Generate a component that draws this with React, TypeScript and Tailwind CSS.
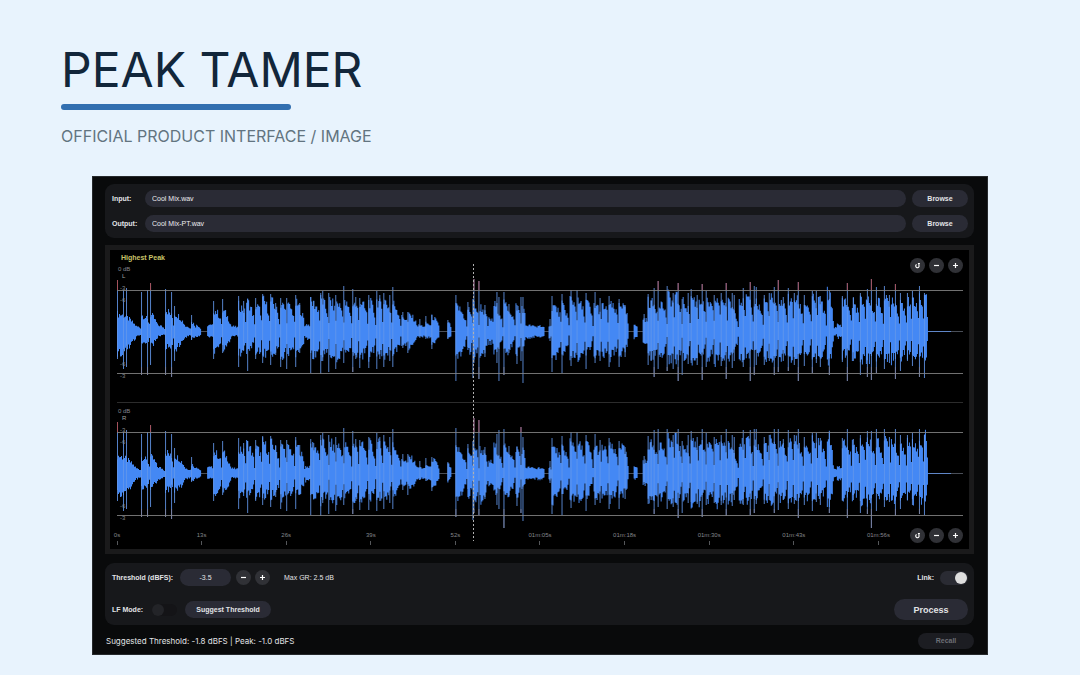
import { useState } from 'react';
import type { ReactNode } from 'react';

// [x, level above centre, level below centre, level left when the next hit lands]
type Hit = [number, number, number, number];
// [x, height above centre, depth below centre]
type Peak = [number, number, number];

const WIDTH = 845;
const CENTER = 70;
const THRESHOLD = 41;

const HITS: Hit[] = [
  [0, 17, 20, 5], [19, 5, 5, 3], [24, 16, 14, 6], [33, 16, 13, 4], [41, 6, 5, 2], [48, 21, 16, 9],
  [57, 17, 16, 5], [68, 5, 5, 3], [74, 9, 7, 3], [79, 6, 5, 2], [84, 0, 0, 0], [90, 6, 5, 6], [96, 21, 18, 8],
  [105, 20, 16, 4], [114, 5, 4, 4], [121, 25, 20, 15], [129, 29, 20, 6], [138, 25, 21, 14], [145, 30, 22, 12],
  [153, 29, 21, 8], [163, 27, 23, 14], [170, 25, 20, 10], [178, 27, 20, 5], [188, 7, 7, 6], [193, 28, 22, 17],
  [203, 31, 26, 8], [212, 30, 28, 15], [219, 28, 25, 11], [227, 27, 20, 9], [235, 28, 24, 16], [242, 29, 24, 10],
  [251, 29, 24, 7], [259, 30, 24, 16], [266, 30, 22, 11], [275, 27, 20, 6], [284, 14, 13, 8], [291, 16, 15, 3],
  [301, 6, 5, 4], [308, 8, 6, 5], [314, 14, 12, 3], [322, 0, 0, 0], [330, 9, 7, 2], [334, 0, 0, 0],
  [338, 24, 24, 5], [350, 22, 20, 8], [356, 27, 25, 4], [362, 24, 25, 6], [371, 12, 11, 9], [376, 26, 19, 4],
  [386, 26, 21, 6], [398, 25, 20, 9], [404, 24, 16, 3], [409, 6, 6, 4], [420, 6, 6, 3], [427, 0, 0, 0],
  [431, 6, 6, 4], [434, 25, 26, 12], [444, 25, 19, 5], [452, 32, 25, 17], [460, 28, 24, 12], [468, 29, 20, 3],
  [476, 26, 22, 15], [484, 25, 22, 14], [491, 26, 24, 11], [501, 28, 22, 9], [511, 0, 0, 0], [516, 8, 6, 3],
  [520, 0, 0, 0], [525, 12, 10, 10], [530, 29, 24, 17], [541, 29, 25, 8], [550, 34, 29, 21], [557, 34, 27, 9],
  [565, 28, 23, 12], [573, 33, 28, 19], [581, 32, 26, 8], [589, 29, 25, 11], [597, 32, 29, 20], [603, 32, 27, 17],
  [610, 28, 25, 6], [621, 32, 27, 19], [628, 32, 27, 10], [636, 30, 23, 8], [646, 29, 25, 20], [652, 32, 27, 10],
  [661, 30, 25, 13], [670, 31, 27, 20], [676, 32, 26, 10], [686, 28, 24, 11], [694, 31, 26, 20], [700, 31, 25, 5],
  [709, 38, 30, 10], [716, 4, 4, 3], [719, 7, 6, 4], [724, 31, 22, 12], [734, 28, 23, 11], [742, 30, 27, 20],
  [748, 32, 27, 12], [758, 30, 24, 12], [766, 31, 25, 20], [773, 33, 27, 9], [782, 30, 24, 11], [789, 29, 22, 12],
  [794, 31, 25, 20], [801, 31, 26, 16], [806, 38, 27, 12], [810, 0, 0, 0],
];

const PEAKS: Peak[] = [
  [0, 51, 28], [6, 41, 38], [9, 43, 36], [24, 39, 44], [30, 41, 44], [33, 48, 34], [48, 42, 44], [54, 39, 46],
  [57, 25, 30], [74, 16, 9], [96, 30, 28], [105, 32, 22], [121, 35, 36], [126, 30, 20], [130, 32, 40],
  [138, 33, 28], [145, 37, 32], [153, 37, 34], [158, 28, 24], [163, 33, 36], [169, 33, 38], [178, 36, 36],
  [182, 28, 22], [193, 34, 42], [196, 30, 26], [203, 38, 43], [205, 40, 30], [211, 38, 41], [218, 36, 38],
  [226, 45, 32], [235, 42, 41], [238, 34, 28], [242, 33, 37], [251, 36, 37], [259, 40, 38], [262, 36, 28],
  [266, 38, 36], [272, 36, 30], [275, 44, 36], [285, 19, 17], [290, 19, 22], [302, 12, 7], [308, 15, 8],
  [314, 16, 18], [330, 11, 8], [338, 36, 50], [350, 29, 16], [355, 32, 47], [356, 52, 32], [361, 50, 48],
  [367, 26, 26], [379, 39, 32], [381, 34, 50], [386, 39, 44], [391, 27, 22], [399, 26, 33], [403, 34, 30],
  [405, 34, 52], [432, 12, 10], [434, 35, 41], [444, 37, 42], [453, 41, 35], [459, 41, 24], [468, 38, 38],
  [477, 39, 32], [482, 33, 30], [491, 35, 36], [501, 32, 36], [507, 26, 26], [526, 17, 12], [530, 37, 34],
  [533, 31, 30], [536, 43, 46], [540, 50, 38], [549, 45, 40], [555, 38, 38], [560, 48, 50], [564, 32, 44],
  [570, 38, 33], [573, 42, 32], [579, 36, 34], [584, 47, 49], [588, 40, 36], [596, 36, 33], [603, 38, 35],
  [608, 48, 48], [614, 38, 37], [616, 36, 30], [625, 43, 36], [632, 49, 50], [636, 45, 44], [638, 44, 34],
  [646, 36, 34], [651, 38, 30], [656, 44, 44], [660, 51, 41], [665, 34, 30], [670, 43, 40], [676, 38, 34],
  [680, 49, 50], [686, 36, 35], [694, 40, 42], [698, 40, 32], [702, 35, 36], [711, 41, 44], [724, 35, 31],
  [729, 48, 50], [735, 34, 30], [742, 38, 44], [749, 42, 46], [753, 52, 49], [758, 44, 42], [766, 45, 38],
  [771, 36, 32], [777, 47, 48], [782, 38, 40], [789, 38, 30], [794, 40, 35], [801, 45, 46], [806, 38, 47],
];

// The right channel follows the left one except for these transients
const RIGHT_PEAKS: Record<number, Peak> = {
  338: [338, 45, 44],
  356: [356, 55, 40],
  361: [361, 53, 42],
  381: [381, 43, 36],
  386: [386, 44, 55],
  403: [403, 46, 40],
  405: [405, 36, 48],
  632: [632, 43, 42],
  753: [753, 42, 55],
};

const rightPeaks = PEAKS.map(([x, up, down]): Peak => {
  return RIGHT_PEAKS[x] ?? (x > 520 ? [x, Math.min(up, 44), Math.round(down * 0.9)] : [x, up, down]);
});

function noise(n: number) {
  const v = Math.sin(n * 12.9898) * 43758.5453;
  return v - Math.floor(v);
}

function buildBody(seed: number) {
  let top = '';
  let bottom = '';
  HITS.forEach(([start, up, down, tail], i) => {
    const end = i + 1 < HITS.length ? HITS[i + 1][0] : WIDTH;
    for (let x = start; x < end; x++) {
      const t = (x - start) / Math.max(end - start, 1);
      const fall = t ** 1.8;
      // short gap just before the next hit
      const gap = x === end - 1 && up > 20 ? 0.6 : 1;
      const u = (up + (tail - up) * fall) * (0.8 + noise(x + seed) * 0.44) * gap;
      const d = (down + (Math.min(tail, down) - down) * fall) * (0.8 + noise(x * 3 + seed) * 0.5) * gap;
      top += `L${x} ${(CENTER + 0.5 - u).toFixed(1)}L${x + 1} ${(CENTER + 0.5 - u).toFixed(1)}`;
      bottom = `L${x + 1} ${(CENTER + 0.5 + d).toFixed(1)}L${x} ${(CENTER + 0.5 + d).toFixed(1)}` + bottom;
    }
  });
  return `M0 ${CENTER + 0.5}${top}${bottom}Z`;
}

function Waveform({ peaks, seed, height }: { peaks: Peak[]; seed: number; height: number }) {
  const loud = peaks.filter(([, up]) => up > THRESHOLD + 4);
  return (
    <svg
      className="block w-full"
      height={height}
      viewBox={`0 0 ${WIDTH} ${height}`}
      preserveAspectRatio="none"
      aria-hidden="true"
    >
      <path d={`M0 ${CENTER + 0.5}H${WIDTH}`} stroke="#4a4f58" />
      <path d={buildBody(seed)} fill="#4488f4" />
      <path d={`M810 ${CENTER + 0.5}H833`} stroke="#5f86c8" />
      <path
        d={peaks.map(([x, up, down]) => `M${x + 0.5} ${CENTER - up}V${CENTER + down}`).join('')}
        stroke="#6396ea"
        strokeOpacity="0.85"
      />
      <path
        d={peaks
          .filter(([, up, down]) => up > 38 && down > 38)
          .map(([x, , down]) => `M${x + 0.5} ${CENTER + 36}V${CENTER + down}`)
          .join('')}
        stroke="#8a8290"
        strokeOpacity="0.7"
      />
      <path
        d={loud.map(([x, up]) => `M${x + 0.5} ${CENTER - up}V${CENTER - THRESHOLD}`).join('')}
        stroke="#a5525c"
      />
      <path
        d={`M0 ${CENTER - THRESHOLD + 0.5}H${WIDTH}M0 ${CENTER + THRESHOLD + 1.5}H${WIDTH}`}
        stroke="#858585"
        strokeOpacity="0.85"
      />
    </svg>
  );
}

function ScaleLabels({ channel }: { channel: string }) {
  return (
    <div className="absolute inset-0 text-[6px] leading-[6px] text-[#85878c]">
      <span className="absolute left-px top-[5px]">0 dB</span>
      <span className="absolute left-[5px] top-3 text-[#a0a0a0]">{channel}</span>
      <span className="absolute left-[3px] top-6">-3</span>
      <span className="absolute left-[3px] top-9">-6</span>
      <span className="absolute left-[3px] top-[100px]">-6</span>
      <span className="absolute left-[3px] top-[112px]">-3</span>
    </div>
  );
}

function RoundButton({ label, children }: { label: string; children: ReactNode }) {
  return (
    <button aria-label={label} className="flex size-[15px] items-center justify-center rounded-full bg-[#303136] text-white">
      {children}
    </button>
  );
}

function MinusIcon() {
  return (
    <svg width="7" height="7" viewBox="0 0 7 7" stroke="currentColor" strokeWidth="1.2">
      <path d="M1 3.5H6" />
    </svg>
  );
}

function PlusIcon() {
  return (
    <svg width="7" height="7" viewBox="0 0 7 7" stroke="currentColor" strokeWidth="1.2">
      <path d="M1 3.5H6M3.5 1V6" />
    </svg>
  );
}

function ResetIcon() {
  return (
    <svg width="7" height="7" viewBox="0 0 7 7" fill="none" stroke="currentColor" strokeWidth="1.1">
      <path d="M2.6 2.5A1.7 1.7 0 1 0 4.9 3.2V1.3M3.9 1.5H5.9" />
    </svg>
  );
}

function ZoomButtons() {
  return (
    <div className="flex gap-1">
      <RoundButton label="Reset zoom"><ResetIcon /></RoundButton>
      <RoundButton label="Zoom out"><MinusIcon /></RoundButton>
      <RoundButton label="Zoom in"><PlusIcon /></RoundButton>
    </div>
  );
}

function FileRow({ id, label, value }: { id: string; label: string; value: string }) {
  return (
    <div className="flex items-center">
      <label htmlFor={id} className="w-[33px] shrink-0 font-bold">{label}</label>
      <input
        id={id}
        defaultValue={value}
        className="h-[17px] min-w-0 flex-1 rounded-full bg-[#2a2b35] px-[7px] text-[#ececf0] outline-none"
      />
      <button className="ml-1.5 h-[17px] w-14 rounded-full bg-[#2a2b35] font-bold">Browse</button>
    </div>
  );
}

const TIMES = ['0s', '13s', '26s', '39s', '52s', '01m:05s', '01m:18s', '01m:30s', '01m:43s', '01m:56s'];

export default function App() {
  const [linked, setLinked] = useState(true);
  const [lfMode, setLfMode] = useState(false);

  return (
    <div className="min-h-screen bg-[#e8f3fd] pb-5 font-['Inter',sans-serif]">
      <header className="px-[61px] pt-11">
        <h1 className="text-[48px] leading-[52px] text-[#12263a]">PEAK TAMER</h1>
        <div className="mt-2 h-1.5 w-[230px] rounded-full bg-[#326fb0]" />
        <p className="mt-4 text-[16px] leading-5 text-[#627480]">OFFICIAL PRODUCT INTERFACE / IMAGE</p>
      </header>

      <main className="mx-[92px] mt-[30px] border border-[#26292c] bg-[#090a0b] pb-[5px] pl-3 pr-[13px] pt-[7px] font-['Liberation_Sans',sans-serif] text-[7px] leading-3 text-[#e2e3e6]">
        <section className="flex flex-col gap-2 rounded-[9px] bg-[#17181b] py-1.5 pl-[7px] pr-1.5">
          <FileRow id="input" label="Input:" value="Cool Mix.wav" />
          <FileRow id="output" label="Output:" value="Cool Mix-PT.wav" />
        </section>

        <section className="relative mt-[7px] border-[5px] border-[#1a1a1b] bg-black pl-[7px] pr-1.5">
          <h2 className="h-[11px] pl-1 pt-0.5 font-bold leading-3 text-[#c9c36b]">Highest Peak</h2>
          <div className="absolute right-1.5 top-2">
            <ZoomButtons />
          </div>
          <div className="relative border-b border-[#2c2c2c]">
            <Waveform peaks={PEAKS} seed={1} height={141} />
            <ScaleLabels channel="L" />
          </div>
          <div className="relative">
            <Waveform peaks={rightPeaks} seed={2} height={128} />
            <ScaleLabels channel="R" />
          </div>
          <div className="grid h-[18px] grid-cols-10 text-[6px] leading-[8px] text-[#85878c]">
            {TIMES.map((time) => (
              <div key={time} className="flex w-0 flex-col items-center">
                <span>{time}</span>
                <span className="mt-0.5 h-1 w-px bg-[#55575a]" />
              </div>
            ))}
          </div>
          {/* playhead */}
          <div className="absolute inset-y-0 left-[7px] right-1.5">
            <div className="absolute bottom-2 left-[42.1%] top-3.5 w-px bg-[repeating-linear-gradient(to_bottom,#b0b0b0_0_2px,transparent_2px_4px)]" />
          </div>
          <div className="absolute bottom-1.5 right-1.5">
            <ZoomButtons />
          </div>
        </section>

        <section className="mt-[9px] rounded-[9px] bg-[#17181b] pb-[5px] pl-[7px] pr-1.5 pt-1.5">
          <div className="flex items-center">
            <label htmlFor="threshold" className="w-[68px] whitespace-nowrap font-bold">Threshold (dBFS):</label>
            <input
              id="threshold"
              defaultValue="-3.5"
              className="h-[17px] w-[51px] rounded-full bg-[#2a2b35] text-center outline-none"
            />
            <div className="ml-[5px] flex gap-1">
              <RoundButton label="Lower threshold"><MinusIcon /></RoundButton>
              <RoundButton label="Raise threshold"><PlusIcon /></RoundButton>
            </div>
            <span className="ml-3.5">Max GR: 2.5 dB</span>
            <label htmlFor="link" className="ml-auto font-bold">Link:</label>
            <input
              id="link"
              type="checkbox"
              checked={linked}
              onChange={(e) => setLinked(e.target.checked)}
              className="ml-1.5 flex h-3.5 w-7 appearance-none items-center rounded-full bg-[#2a2b33] px-px before:size-3 before:rounded-full before:bg-[#4a4b50] checked:justify-end checked:before:bg-[#dedede]"
            />
          </div>
          <div className="mt-[13px] flex items-center">
            <label htmlFor="lf" className="w-10 font-bold">LF Mode:</label>
            <input
              id="lf"
              type="checkbox"
              checked={lfMode}
              onChange={(e) => setLfMode(e.target.checked)}
              className="flex h-3 w-[25px] appearance-none items-center rounded-full bg-[#141417] before:size-3 before:rounded-full before:bg-[#232428] checked:justify-end checked:before:bg-[#dedede]"
            />
            <button className="ml-2 h-[17px] w-[86px] rounded-full bg-[#2a2b35] font-bold">Suggest Threshold</button>
            <button className="ml-auto h-[21px] w-[74px] rounded-full bg-[#2a2b35] text-[9px] font-bold">Process</button>
          </div>
        </section>

        <footer className="mt-2 flex items-center justify-between pl-px">
          <p className="font-['Inter',sans-serif] text-[8px]">Suggested Threshold: -1.8 dBFS | Peak: -1.0 dBFS</p>
          <button disabled className="h-4 w-14 rounded-full bg-[#1c1d22] font-bold text-[#6d6f75]">Recall</button>
        </footer>
      </main>
    </div>
  );
}
